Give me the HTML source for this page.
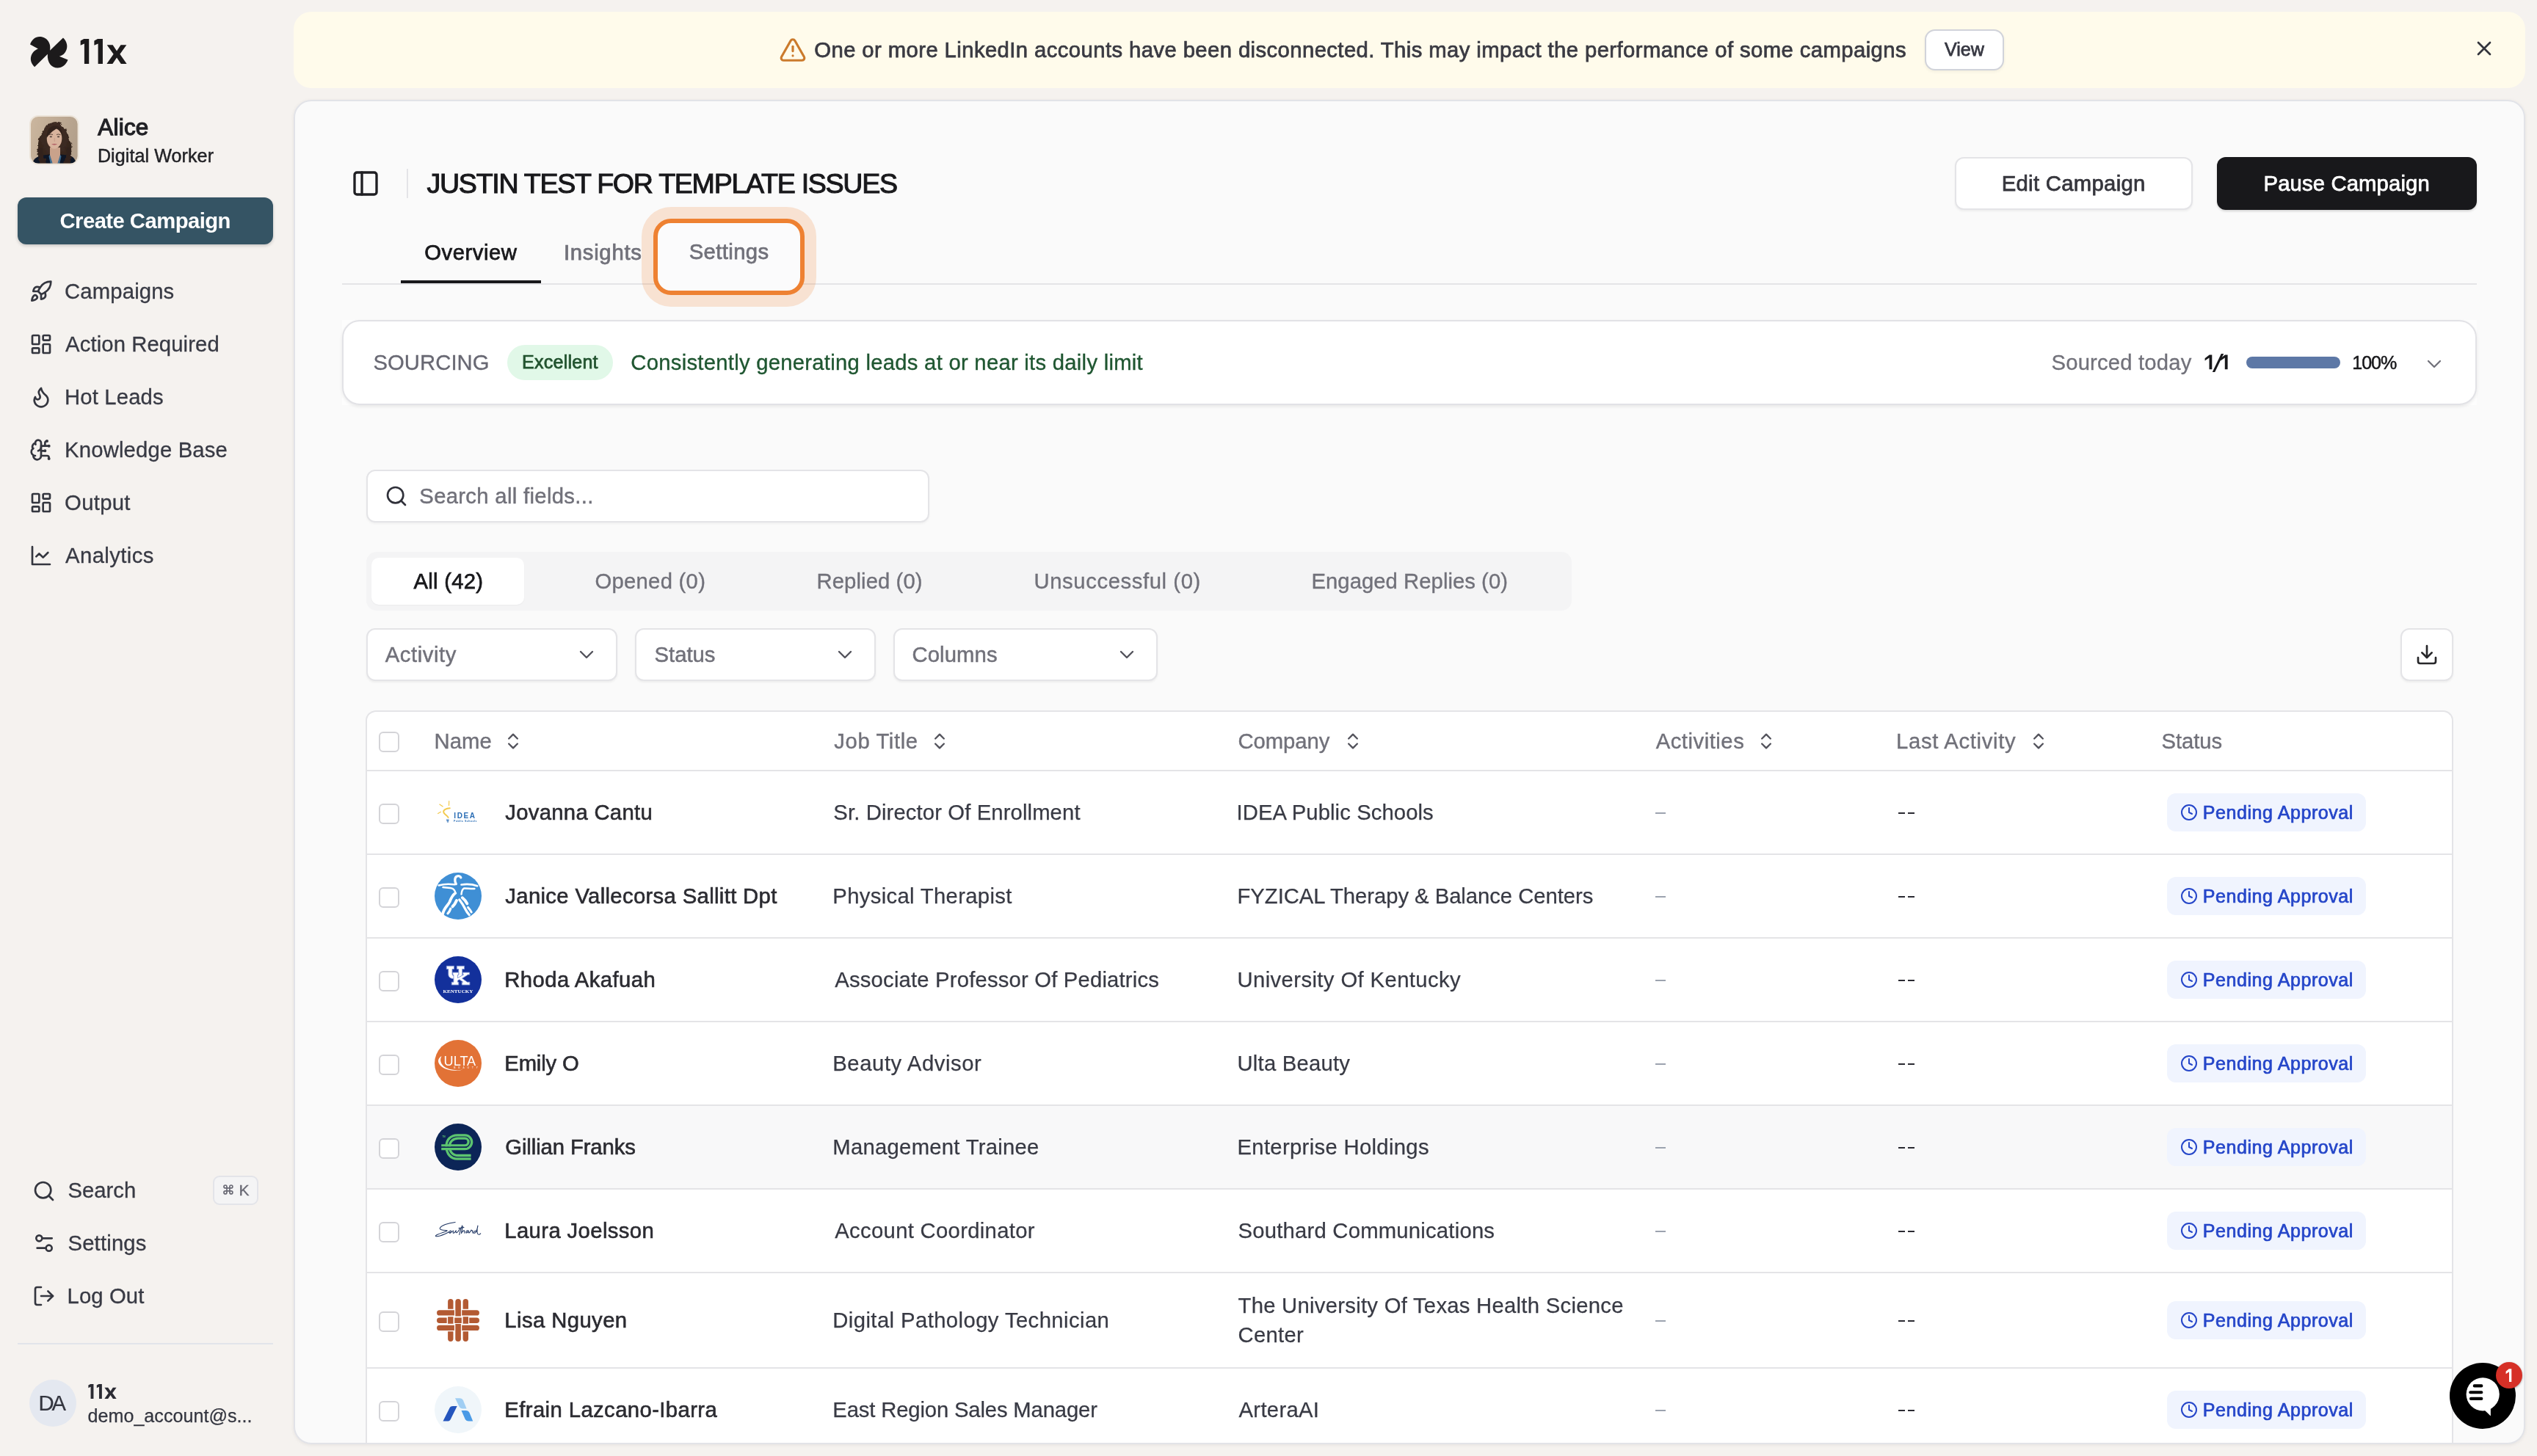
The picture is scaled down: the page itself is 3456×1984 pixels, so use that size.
<!DOCTYPE html>
<html lang="en">
<head>
<meta charset="utf-8">
<title>11x - Campaign</title>
<style>
*{box-sizing:border-box;margin:0;padding:0}
html,body{width:3456px;height:1984px;overflow:hidden}
body{background:#f5f2ef;font-family:"Liberation Sans",sans-serif;color:#27272a;position:relative;font-size:28px;line-height:1}
#app{position:absolute;left:0;top:0;width:3456px;height:1984px;will-change:transform}
.abs{position:absolute}
.t{position:absolute;white-space:nowrap;line-height:40px;height:40px}
.x{position:absolute;white-space:nowrap;line-height:40px;height:40px}
.med{-webkit-text-stroke:.75px currentColor}
.semi{-webkit-text-stroke:.9px currentColor}
svg{display:block}
.ico{position:absolute;fill:none;stroke:#34363f;stroke-width:2;stroke-linecap:round;stroke-linejoin:round}
/* sidebar */
.nav{position:absolute;left:88px;font-size:28px;line-height:40px;height:40px;color:#383a44;white-space:nowrap;letter-spacing:.9px;-webkit-text-stroke:.3px currentColor}
/* main */
#banner{position:absolute;left:400px;top:16px;width:3040px;height:104px;border-radius:24px;background:#fffbeb}
#panel{position:absolute;left:400px;top:136px;width:3040px;height:1832px;border-radius:24px;background:#fafafa;border:2px solid #e2e3e8;box-shadow:0 1px 5px rgba(0,0,0,.07);overflow:hidden}
.btn{position:absolute;border-radius:12px;font-size:30px;text-align:center}
.dd{position:absolute;top:856px;height:72px;border:2px solid #e4e4e7;border-radius:12px;background:#fff;box-shadow:0 2px 3px rgba(0,0,0,.05)}
.dd span{position:absolute;left:23px;top:14px;line-height:40px;font-size:28px;color:#71717a;letter-spacing:.9px;-webkit-text-stroke:.5px currentColor}
.tab{position:absolute;top:561px;line-height:40px;font-size:28px;color:#71717a;white-space:nowrap}
/* table */
#tbl{position:absolute;left:498px;top:968px;width:2844px;height:998px;border:2px solid #e4e4e7;border-bottom:none;border-radius:14px 14px 0 0;background:#fff;overflow:hidden}
.row{position:absolute;left:0;width:2840px;border-top:2px solid #e4e4e7}
.cb{position:absolute;left:16px;width:28px;height:28px;border:2px solid #d4d4d8;border-radius:6px;background:#fff}
.th{position:absolute;top:20px;line-height:40px;font-size:28px;color:#71717a;white-space:nowrap;letter-spacing:1.05px;-webkit-text-stroke:.4px currentColor}
.c{position:absolute;line-height:40px;font-size:28px;white-space:nowrap}
.nm{left:187px;color:#2b2b31;letter-spacing:.93px;-webkit-text-stroke:.55px currentColor}
.jt{left:635px;color:#383a44;letter-spacing:.72px}
.co{left:1185px;color:#383a44;letter-spacing:.62px}
.ac{left:1753px;color:#a1a1aa}
.la{left:2083px;color:#27272a}
.badge{position:absolute;left:2452px;width:271px;height:52px;border-radius:12px;background:#f0f4fe;color:#2546c9}
.badge b{position:absolute;left:48.500px;top:6px;line-height:40px;font-size:24px;font-weight:400;white-space:nowrap;letter-spacing:1.100px;-webkit-text-stroke:.7px currentColor}
.badge svg{position:absolute;left:18px;top:14px;width:24px;height:24px;fill:none;stroke:#2546c9;stroke-width:2;stroke-linecap:round;stroke-linejoin:round}
.ds{position:absolute;width:9px;height:2.500px;background:#2a2a32}
.jt,.co{-webkit-text-stroke:.25px currentColor}
.logo{position:absolute;left:92px;width:64px;height:64px}
.srt{position:absolute;width:28px;height:28px;fill:none;stroke:#52525b;stroke-width:2;stroke-linecap:round;stroke-linejoin:round}
</style>
</head>
<body>
<div id="app">
<!-- ============ SIDEBAR ============ -->
<svg class="abs" style="left:41px;top:50px" width="52" height="43" viewBox="0 0 51 42"><path fill="#1c1a1b" d="M0 10.1C2.5 4 7 0 12.6 0 21 0 28.5 7 26.6 18.2L44.1 1.3C49 6 50.5 12 48.6 17.3 47 22 43.5 25 39.1 26.2L50.5 30.9C48 37.5 43 41.6 36.6 41.6 29 41.6 22.6 35 23.4 23.2L6 40.4C1.5 36 0 31 1.3 26.2 2.5 21.5 6 18 10.7 16.1Z"/></svg>
<svg class="abs" style="left:109px;top:53px" width="64" height="34" viewBox="0 0 63.500 33.800"><g fill="#1c1a1b"><path d="M5.200 0H12.100V33.800H5.800V6.400L.600 8.600V2.500Z"/><path d="M23.800 0H30.700V33.800H24.400V6.400L19.200 8.600V2.500Z"/><path d="M36.400 8.100H44.300L49.700 16.300 55.100 8.100H62.900L54 20.700 63.200 33.800H55.400L49.700 25.300 44 33.800H36.100L45.300 20.700Z"/></g></svg>

<!-- Alice avatar -->
<svg class="abs" style="left:40px;top:157px" width="67.600" height="67.600" viewBox="0 0 67.600 67.600">
 <defs><clipPath id="av"><rect x="2" y="2" width="63.600" height="63.600" rx="10"/></clipPath>
 <linearGradient id="avbg" x1="0" y1="0" x2="1" y2=".3"><stop offset="0" stop-color="#ccb79f"/><stop offset="1" stop-color="#b3a08b"/></linearGradient>
 <filter id="avbl" x="-5%" y="-5%" width="110%" height="110%"><feGaussianBlur stdDeviation=".5"/></filter>
 <filter id="avcu" x="-10%" y="-10%" width="120%" height="120%"><feTurbulence type="fractalNoise" baseFrequency=".16" numOctaves="2" seed="7" result="n"/><feDisplacementMap in="SourceGraphic" in2="n" scale="6" xChannelSelector="R" yChannelSelector="G"/></filter>
 <radialGradient id="avhr" cx=".5" cy=".35" r=".7"><stop offset="0" stop-color="#4a3428"/><stop offset="1" stop-color="#2c1f19"/></radialGradient></defs>
 <rect width="67.600" height="67.600" rx="12" fill="#ece4d9"/>
 <g clip-path="url(#av)"><rect width="67.600" height="67.600" fill="url(#avbg)"/>
 <g filter="url(#avbl)">
  <path filter="url(#avcu)" d="M36 9C29 9 23 13 20 20 17 26 13 29 13 34 11 39 13 43 11 47 9 51 13 54 12 57 13 61 17 64 19 69H51C55 63 56 59 57 55 59 51 56 47 57.500 43 58 38 54 34 53.500 29 52 21 47 11 36 9Z" fill="url(#avhr)"/>
  <path d="M4 68C5 60 8 57 17 55L30 53 34 60 38 53 52 54.500C60 56 63 59 64 68Z" fill="#0e1526"/>
  <path d="M28 44H42V56L38.500 67H31.500L28 56Z" fill="#c9a28b"/>
  <path d="M28 54 32 67H29L26.500 56ZM42 54 43.500 56 41 67H38Z" fill="#3f6d90"/>
  <ellipse cx="34" cy="31.500" rx="10.300" ry="14.200" fill="#d8b39d"/>
  <path d="M23.500 31C23 20 28 14.500 35 14.300 41.500 14 45 19 45.300 28 43 23 40 19.500 37 18.500 33 20.500 28 24.500 23.500 31Z" fill="#33241d"/>
  <path d="M23.800 28C22.500 34 23.200 40 25.500 46 20.500 44 18.500 36 20 27ZM44.800 27C46 33 45.500 40 43 46 47.500 43 49.500 35 48 26Z" fill="#3a2a22"/>
  <path filter="url(#avcu)" d="M19 44C16.500 52 20 60 25 69H16C11.500 60 11.500 52 14 45ZM49.500 44C52.500 52 49.500 60 45 69H54C57.500 60 57.500 52 55 45Z" fill="#33241d"/>
  <ellipse cx="29.300" cy="29.300" rx="1.700" ry=".9" fill="#4a3a35"/><ellipse cx="39.600" cy="29.300" rx="1.700" ry=".9" fill="#4a3a35"/>
  <path d="M26.500 26.700Q29.500 25.300 32 26.500M37 26.500Q39.500 25.300 42.500 26.700" stroke="#3a2a22" stroke-width=".8" fill="none"/>
  <path d="M34.300 31V36" stroke="#c59c87" stroke-width=".9"/>
  <path d="M30 39.300Q34 38 38.200 39.300 34 42 30 39.300Z" fill="#b5666a"/>
 </g></g>
</svg>

<div class="abs" style="left:24px;top:269px;width:348px;height:64px;border-radius:12px;background:#355464;box-shadow:0 2px 4px rgba(0,0,0,.18)"></div>

<!-- nav icons -->
<svg class="ico" style="left:40px;top:381px" width="32" height="32" viewBox="0 0 24 24"><path d="M4.5 16.5c-1.5 1.26-2 5-2 5s3.74-.5 5-2c.71-.84.7-2.13-.09-2.91a2.18 2.18 0 0 0-2.91-.09z"/><path d="m12 15-3-3a22 22 0 0 1 2-3.95A12.88 12.88 0 0 1 22 2c0 2.72-.78 7.5-6 11a22.35 22.35 0 0 1-4 2z"/><path d="M9 12H4s.55-3.03 2-4c1.62-1.08 5 0 5 0"/><path d="M12 15v5s3.03-.55 4-2c1.08-1.62 0-5 0-5"/></svg>

<svg class="ico" style="left:40px;top:453px" width="32" height="32" viewBox="0 0 24 24"><rect width="7" height="9" x="3" y="3" rx="1"/><rect width="7" height="5" x="14" y="3" rx="1"/><rect width="7" height="9" x="14" y="12" rx="1"/><rect width="7" height="5" x="3" y="16" rx="1"/></svg>

<svg class="ico" style="left:40px;top:525px" width="32" height="32" viewBox="0 0 24 24"><path d="M8.5 14.5A2.5 2.5 0 0 0 11 12c0-1.38-.5-2-1-3-1.072-2.143-.224-4.054 2-6 .5 2.500 2 4.900 4 6.500 2 1.600 3 3.500 3 5.500a7 7 0 1 1-14 0c0-1.153.433-2.294 1-3a2.500 2.500 0 0 0 2.500 2.500z"/></svg>

<svg class="ico" style="left:40px;top:597px" width="32" height="32" viewBox="0 0 24 24"><path d="M12 5a3 3 0 1 0-5.997.125 4 4 0 0 0-2.526 5.770 4 4 0 0 0 .556 6.588A4 4 0 1 0 12 18Z"/><path d="M9 13a4.500 4.500 0 0 0 3-4"/><path d="M6.003 5.125A3 3 0 0 0 6.401 6.500"/><path d="M3.477 10.896a4 4 0 0 1 .585-.396"/><path d="M6 18a4 4 0 0 1-1.967-.516"/><path d="M12 13h4"/><path d="M12 18h6a2 2 0 0 1 2 2v1"/><path d="M12 8h8"/><path d="M16 8V5a2 2 0 0 1 2-2"/><circle cx="16" cy="13" r=".5"/><circle cx="18" cy="3" r=".5"/><circle cx="20" cy="21" r=".5"/><circle cx="20" cy="8" r=".5"/></svg>

<svg class="ico" style="left:40px;top:669px" width="32" height="32" viewBox="0 0 24 24"><rect width="7" height="9" x="3" y="3" rx="1"/><rect width="7" height="5" x="14" y="3" rx="1"/><rect width="7" height="9" x="14" y="12" rx="1"/><rect width="7" height="5" x="3" y="16" rx="1"/></svg>

<svg class="ico" style="left:40px;top:741px" width="32" height="32" viewBox="0 0 24 24"><path d="M3 3v18h18"/><path d="m19 9-5 5-4-4-3 3"/></svg>

<!-- bottom nav -->
<svg class="ico" style="left:44px;top:1607px" width="32" height="32" viewBox="0 0 24 24"><circle cx="11" cy="11" r="8"/><path d="m21 21-4.300-4.300"/></svg>
<div class="abs" style="left:290px;top:1602px;width:62px;height:40px;border-radius:9px;border:2px solid #e3e4e9;background:#f4f4f5"></div>
<svg class="abs" style="left:302.670px;top:1612.670px;fill:none;stroke:#6a6a75;stroke-width:2.570;stroke-linecap:round;stroke-linejoin:round" width="15.870" height="15.870" viewBox="0 0 24 24"><path d="M15 6v12a3 3 0 1 0 3-3H6a3 3 0 1 0 3 3V6a3 3 0 1 0-3 3h12a3 3 0 1 0-3-3"/></svg>
<div class="t" style="left:325.600px;top:1602.400px;font-size:21px;color:#6a6a75;-webkit-text-stroke:.35px currentColor">K</div>

<svg class="ico" style="left:44px;top:1678px" width="32" height="32" viewBox="0 0 24 24"><path d="M20 7h-9"/><path d="M14 17H5"/><circle cx="17" cy="17" r="3"/><circle cx="7" cy="7" r="3"/></svg>

<svg class="ico" style="left:44px;top:1750px" width="32" height="32" viewBox="0 0 24 24"><path d="M9 21H5a2 2 0 0 1-2-2V5a2 2 0 0 1 2-2h4"/><polyline points="16 17 21 12 16 7"/><line x1="21" x2="9" y1="12" y2="12"/></svg>

<div class="abs" style="left:24px;top:1830px;width:348px;height:2px;background:#e2e4ea"></div>
<div class="abs" style="left:40px;top:1880px;width:64px;height:64px;border-radius:50%;background:#e4e8f0"></div>
<svg class="abs" style="left:120px;top:1885.500px" width="39" height="20.200" viewBox="0 0 63.500 33.800" preserveAspectRatio="none"><g fill="#2b2b33"><path d="M5.200 0H12.100V33.800H5.800V6.400L.600 8.600V2.500Z"/><path d="M23.800 0H30.700V33.800H24.400V6.400L19.200 8.600V2.500Z"/><path d="M36.400 8.100H44.300L49.700 16.300 55.100 8.100H62.900L54 20.700 63.200 33.800H55.400L49.700 25.300 44 33.800H36.100L45.300 20.700Z"/></g></svg>
<!-- ============ BANNER ============ -->
<div id="banner"></div>
<svg class="abs" style="left:1061.400px;top:48.850px;fill:none;stroke:#cb7a2c;stroke-width:2;stroke-linecap:round;stroke-linejoin:round" width="38" height="38" viewBox="0 0 24 24"><path d="m21.73 18-8-14a2 2 0 0 0-3.480 0l-8 14A2 2 0 0 0 4 21h16a2 2 0 0 0 1.730-3"/><path d="M12 9v4"/><path d="M12 17h.01"/></svg>
<div class="abs" style="left:2622px;top:40px;width:108px;height:56px;border-radius:14px;border:2px solid #d1d3da;background:#fff;box-shadow:0 2px 4px rgba(0,0,0,.05)"></div>
<svg class="abs" style="left:3367px;top:49px;fill:none;stroke:#33343c;stroke-width:2.700;stroke-linecap:round" width="34" height="34" viewBox="0 0 34 34"><path d="M9 9 25 25M25 9 9 25"/></svg>

<!-- ============ PANEL ============ -->
<div id="panel"></div>

<svg class="ico" style="left:478px;top:230px;stroke:#1f1f23" width="40" height="40" viewBox="0 0 24 24"><rect width="18" height="18" x="3" y="3" rx="2"/><path d="M9 3v18"/></svg>
<div class="abs" style="left:554px;top:230px;width:2px;height:40px;background:#e4e4e7"></div>

<div class="abs" style="left:2663px;top:214px;width:324px;height:72px;border-radius:12px;border:2px solid #e4e4e7;background:#fff;box-shadow:0 2px 3px rgba(0,0,0,.05)"></div>
<div class="abs" style="left:3020px;top:214px;width:354px;height:72px;border-radius:12px;background:#18181b;box-shadow:0 2px 3px rgba(0,0,0,.15)"></div>

<!-- tabs -->
<div class="abs" style="left:466px;top:386px;width:2908px;height:2px;background:#e4e4e7"></div>
<div class="abs" style="left:546px;top:382px;width:191px;height:4px;background:#18181b"></div>
<div class="abs" style="left:890px;top:298px;width:206px;height:104px;border-radius:24px;border:6px solid #ee8132;background:#fbfbfc;box-shadow:0 0 0 16px rgba(238,129,50,.2)"></div>

<!-- sourcing card -->
<div class="abs" style="left:466px;top:436px;width:2908px;height:116px;background:#fdfdfd"></div>
<div class="abs" style="left:466px;top:436px;width:2908px;height:116px;border-radius:24px;border:2px solid #e2e2e6;background:#fff;box-shadow:0 2px 4px rgba(0,0,0,.08)"></div>
<div class="abs" style="left:691px;top:470px;width:144px;height:48px;border-radius:24px;background:#e1f8e8"></div>

<svg class="abs" style="left:3003px;top:482px" width="32" height="25" viewBox="0 0 32 25"><g fill="#18181b"><path d="M6.700 1.400H10.300V21.300H6.500V5.600L.600 9.400V6.300Z"/><path d="M28 1.400H31.600V21.300H27.800V5.600L21.900 9.400V6.300Z"/><path d="M22.800 0H26.200L14.200 24.900H10.800Z"/></g></svg>
<div class="abs" style="left:3060px;top:486px;width:128px;height:16px;border-radius:8px;background:#5d78a6"></div>
<svg class="ico" style="left:3300px;top:480px;stroke:#71717a;stroke-width:1.700" width="32" height="32" viewBox="0 0 24 24"><path d="m6 9 6 6 6-6"/></svg>

<!-- search -->
<div class="abs" style="left:499px;top:640px;width:767px;height:72px;border-radius:12px;border:2px solid #e4e4e7;background:#fff;box-shadow:0 2px 3px rgba(0,0,0,.04)"></div>
<svg class="ico" style="left:524px;top:660px;stroke:#30313a" width="32" height="32" viewBox="0 0 24 24"><circle cx="11" cy="11" r="8"/><path d="m21 21-4.300-4.300"/></svg>

<!-- segmented tabs -->
<div class="abs" style="left:499px;top:752px;width:1642px;height:80px;border-radius:14px;background:#f4f4f5"></div>
<div class="abs" style="left:506px;top:760px;width:208px;height:64px;border-radius:10px;background:#fff;box-shadow:0 1px 2px rgba(0,0,0,.04)"></div>

<!-- dropdowns -->
<div class="dd" style="left:499px;width:342px"></div>
<div class="dd" style="left:865px;width:328px"></div>
<div class="dd" style="left:1217px;width:360px"></div>
<svg class="ico" style="left:783px;top:876px;stroke:#52525b;stroke-width:1.800" width="32" height="32" viewBox="0 0 24 24"><path d="m6 9 6 6 6-6"/></svg>
<svg class="ico" style="left:1135px;top:876px;stroke:#52525b;stroke-width:1.800" width="32" height="32" viewBox="0 0 24 24"><path d="m6 9 6 6 6-6"/></svg>
<svg class="ico" style="left:1519px;top:876px;stroke:#52525b;stroke-width:1.800" width="32" height="32" viewBox="0 0 24 24"><path d="m6 9 6 6 6-6"/></svg>
<div class="abs" style="left:3270px;top:856px;width:72px;height:72px;border-radius:12px;border:2px solid #e4e4e7;background:#fff;box-shadow:0 2px 3px rgba(0,0,0,.05)"></div>
<svg class="ico" style="left:3290px;top:876px;stroke:#27272a" width="32" height="32" viewBox="0 0 24 24"><path d="M21 15v4a2 2 0 0 1-2 2H5a2 2 0 0 1-2-2v-4"/><polyline points="7 10 12 15 17 10"/><line x1="12" x2="12" y1="15" y2="3"/></svg>
<!-- ============ TABLE ============ -->
<div id="tbl">
<div class="cb" style="top:27px"></div>
<svg class="srt" style="left:184.85px;top:26.200px" viewBox="0 0 24 24"><path d="m7 15 5 5 5-5"/><path d="m7 9 5-5 5 5"/></svg>
<svg class="srt" style="left:765.9px;top:26.200px" viewBox="0 0 24 24"><path d="m7 15 5 5 5-5"/><path d="m7 9 5-5 5 5"/></svg>
<svg class="srt" style="left:1329.3px;top:26.200px" viewBox="0 0 24 24"><path d="m7 15 5 5 5-5"/><path d="m7 9 5-5 5 5"/></svg>
<svg class="srt" style="left:1892.2px;top:26.200px" viewBox="0 0 24 24"><path d="m7 15 5 5 5-5"/><path d="m7 9 5-5 5 5"/></svg>
<svg class="srt" style="left:2263.2px;top:26.200px" viewBox="0 0 24 24"><path d="m7 15 5 5 5-5"/><path d="m7 9 5-5 5 5"/></svg>
<div class="row" style="top:79px;height:114px">
<div class="cb" style="top:44px"></div>
<svg class="logo" style="top:24px" viewBox="0 0 64 64"><g fill="none" stroke="#f2c94c" stroke-linecap="round"><path d="M20.800 26.300c-5 .2-9 2.200-8.600 5.200.5 3.300 5.400 4.800 6.400 7.500" stroke-width="1.900"/><path d="M19.700 16.700l-.2 5.800M6.800 21.100l4.400 2.800M4.600 33.500l3.900-2.200" stroke-width="1.200"/></g><path d="M16.400 42h2.800M16.800 43.500h2.200M17.300 45h1.400" stroke="#2a6db5" stroke-width="1" stroke-linecap="round"/><text x="26.300" y="39.800" textLength="28.600" lengthAdjust="spacing" font-family="Liberation Sans" font-weight="700" font-size="10" fill="#2a6db5">IDEA</text><text x="26.100" y="45.100" textLength="31.300" lengthAdjust="spacing" font-family="Liberation Sans" font-weight="700" font-size="3.500" fill="#2a6db5">Public Schools</text></svg>
<i class="ds" style="left:1754.500px;top:55.8px;width:14.500px;background:#9ca3af"></i><i class="ds" style="left:2086px;top:55.8px"></i><i class="ds" style="left:2099px;top:55.8px"></i>
<div class="badge" style="top:30px"><svg viewBox="0 0 24 24"><circle cx="12" cy="12" r="10"/><polyline points="12 6 12 12 16 14"/></svg></div>
</div>
<div class="row" style="top:193px;height:114px">
<div class="cb" style="top:44px"></div>
<svg class="logo" style="top:24px" viewBox="0 0 64 64"><circle cx="32" cy="32" r="32" fill="#3f8fd5"/><g fill="none" stroke="#fff" stroke-linecap="round" stroke-linejoin="round"><path d="M29.300 15.600C27 12 27.200 6.300 30.600 5c2.400-.8 4.800.2 5.200 1.800" stroke-width="3.300"/><path d="M5.700 17.400c6.500-1.800 15-1.900 21.800-1.100M36.400 16.500c6.700-1 15.500-.5 21.800 1.700" stroke-width="2.600"/><path d="M11.500 20.100c4.700.6 9.500.4 13 1.700 2 1.200 2.700 2.200 3.300 3.800M54.400 21.900c-4.500.7-10.400-.9-14.400-.4-2.500 1.500-3.200 4.500-3.500 8.100" stroke-width="2.500"/><path d="M28.300 28c-4.300 3-6.300 8-7.800 12-2.500 5-7.500 8-9.300 16" stroke-width="3.800"/><path d="M30 38c-1.500 3.500-3.500 6.500-5.500 8.300" stroke-width="4"/><path d="M21.800 49.200c-1 2.800-2.300 5.300-3.800 6.500" stroke-width="3.300"/><path d="M33.800 37c3.200 4 6.200 9 8.200 13 1.500 3 3.500 6 5.200 7.600" stroke-width="3.300"/><path d="M37.800 34.300c2.700 2.200 5.200 5.200 6.600 8.100" stroke-width="3.800"/><path d="M45.600 47.400c1.900 2.100 3.600 4.600 4.600 6.600" stroke-width="3"/></g></svg>
<i class="ds" style="left:1754.500px;top:55.8px;width:14.500px;background:#9ca3af"></i><i class="ds" style="left:2086px;top:55.8px"></i><i class="ds" style="left:2099px;top:55.8px"></i>
<div class="badge" style="top:30px"><svg viewBox="0 0 24 24"><circle cx="12" cy="12" r="10"/><polyline points="12 6 12 12 16 14"/></svg></div>
</div>
<div class="row" style="top:307px;height:114px">
<div class="cb" style="top:44px"></div>
<svg class="logo" style="top:24px" viewBox="0 0 64 64"><circle cx="32" cy="32" r="32" fill="#13309b"/><g fill="#fff" stroke="#7d92d2" stroke-width=".9" stroke-linejoin="round"><path d="M16.300 13.300H26.500V17.600H24V24.500C24 26 25 26.600 28.200 26.600 31.500 26.600 32.800 26 32.800 24.500V17.600H30.300V13.300H40.500V17.600H37.700V24.500C37.700 29 34.500 30.800 28.200 30.800 22 30.800 18.800 29 18.800 24.500V17.600H16.300Z"/><path d="M24.800 22.100H32.800V25.600H31.400V29.600L39.600 25.100H38.600V22.100H47.600V25.100H45.600L37.600 30.200 44.600 35.200H47.900V39.100H37.200V35.200H38.800L33.800 31.800 31.400 33.200V35.200H32.800V39.100H23.200V35.200H25.900V25.600H24.800Z"/></g><text x="11.600" y="50.100" textLength="40.700" lengthAdjust="spacingAndGlyphs" font-family="Liberation Serif" font-weight="700" font-size="7" fill="#fff">KENTUCKY</text></svg>
<i class="ds" style="left:1754.500px;top:55.8px;width:14.500px;background:#9ca3af"></i><i class="ds" style="left:2086px;top:55.8px"></i><i class="ds" style="left:2099px;top:55.8px"></i>
<div class="badge" style="top:30px"><svg viewBox="0 0 24 24"><circle cx="12" cy="12" r="10"/><polyline points="12 6 12 12 16 14"/></svg></div>
</div>
<div class="row" style="top:421px;height:114px">
<div class="cb" style="top:44px"></div>
<svg class="logo" style="top:24px" viewBox="0 0 64 64"><circle cx="32" cy="32" r="32" fill="#e27236"/><text x="12.600" y="34.700" textLength="43.600" lengthAdjust="spacingAndGlyphs" font-family="Liberation Sans" font-size="19" fill="#fff">ULTA</text><path d="M9.500 22.100C4 25.500 3.300 31 9 36c6 5 19 7.500 30.100 4.500-11 1.800-22.100-.3-27.100-5-4.200-4-4.900-9-2.500-13.400z" fill="#fff"/><text x="25.900" y="38.900" textLength="33" lengthAdjust="spacing" font-family="Liberation Sans" font-weight="700" font-size="3.600" fill="#f7d3bf">BEAUTY</text></svg>
<i class="ds" style="left:1754.500px;top:55.8px;width:14.500px;background:#9ca3af"></i><i class="ds" style="left:2086px;top:55.8px"></i><i class="ds" style="left:2099px;top:55.8px"></i>
<div class="badge" style="top:30px"><svg viewBox="0 0 24 24"><circle cx="12" cy="12" r="10"/><polyline points="12 6 12 12 16 14"/></svg></div>
</div>
<div class="row" style="top:535px;height:114px;background:#f8f8f9">
<div class="cb" style="top:44px"></div>
<svg class="logo" style="top:24px" viewBox="0 0 64 64"><circle cx="32" cy="32" r="32" fill="#0c2557"/><g fill="none" stroke="#5cc46f" stroke-width="3.300"><path d="M9.200 34.600H41.300A9.400 9.400 0 0 0 41.300 15.800H31C22 15.800 16 22 16 31 16 41 22 48.200 31 48.200H49.600"/><path d="M9.200 29.800H41.300A4.800 4.800 0 0 0 41.300 20.200H32C25 20.200 20.300 25 20.300 31 20.300 38.500 25 43.500 32 43.500H49.600"/></g><path d="M9.200 32.200H44" stroke="#0c2557" stroke-width="1.500"/><text x="10.600" y="19.200" font-family="Liberation Sans" font-weight="700" font-size="2.800" fill="#5cc46f">TM</text></svg>
<i class="ds" style="left:1754.500px;top:55.8px;width:14.500px;background:#9ca3af"></i><i class="ds" style="left:2086px;top:55.8px"></i><i class="ds" style="left:2099px;top:55.8px"></i>
<div class="badge" style="top:30px"><svg viewBox="0 0 24 24"><circle cx="12" cy="12" r="10"/><polyline points="12 6 12 12 16 14"/></svg></div>
</div>
<div class="row" style="top:649px;height:114px">
<div class="cb" style="top:44px"></div>
<svg class="logo" style="top:24px" viewBox="0 0 64 64"><g fill="none" stroke="#1d3461" stroke-width="1.050" stroke-linecap="round" stroke-linejoin="round"><path d="M28.100 20.400C18 21.500 9 25 7.300 28.400 6.500 31 12 31.200 16.600 31.700 20 32.200 8 35 2.500 38 0 39.600 2 40.200 5 39.600 10 38.600 15 36 19.300 33.900"/><path d="M19.300 33.900C20.500 32 22.500 31.500 22.800 33 23 34.800 20.500 36 20 34.800 21 34.500 24 33.500 25.500 32 25 34 24.800 35.500 26 35.200 27 35 28.500 33 29.200 31.800 29 33.500 28.800 35 30 34.800 31.500 34.500 33.500 31 35 28.500"/><path d="M37.500 25.100C36 29 34.500 33 33.800 37.500M33 28.600 40 27.600"/><path d="M38.500 26C37.500 30 36.800 33 36.500 35.500 37.500 33 39.500 31.500 40.500 32 41.500 32.800 40 34.800 41 35.200"/><path d="M46 32C44.500 31 42.500 33 42.800 34.600 43.200 35.800 45.500 34 46.200 32 46 33.500 46 35 47 35 48.500 34 49.500 32 50 31 50.500 32 51.500 32.200 52 32 51.500 33.500 51.500 35 52.500 35.200"/><path d="M56.500 32.500C55 31.500 53 33.500 53.500 35 54 36 56.500 34.500 57.200 32 58 29.500 58.800 27 58.900 25.100 58 29 57.500 33 58.500 36 59.500 37.800 61.800 37.500 62.700 35.800"/></g></svg>
<i class="ds" style="left:1754.500px;top:55.8px;width:14.500px;background:#9ca3af"></i><i class="ds" style="left:2086px;top:55.8px"></i><i class="ds" style="left:2099px;top:55.8px"></i>
<div class="badge" style="top:30px"><svg viewBox="0 0 24 24"><circle cx="12" cy="12" r="10"/><polyline points="12 6 12 12 16 14"/></svg></div>
</div>
<div class="row" style="top:763px;height:130px">
<div class="cb" style="top:52px"></div>
<svg class="logo" style="top:32px" viewBox="0 0 64 64"><g fill="#b35a33"><path d="M18.100 16.800V6.700A3.700 3.700 0 0 1 25.500 6.700V16.800ZM38.600 16.800V6.700A3.700 3.700 0 0 1 46 6.700V16.800ZM18.100 47.200V57.300A3.700 3.700 0 0 0 25.500 57.300V47.200ZM38.600 47.200V57.300A3.700 3.700 0 0 0 46 57.300V47.200Z"/><path d="M18.100 27.200H25.500V36.800H18.100ZM38.600 27.200H46V36.800H38.600ZM27.200 28.500H36.800V36H27.200Z"/><path d="M28.300 26.600V6.800A3.800 3.800 0 0 1 35.900 6.800V26.600ZM28.300 37V57.200A3.800 3.800 0 0 0 35.900 57.200V37Z"/><path d="M26.900 18.300H6.700A3.650 3.650 0 0 0 6.700 25.600H26.900ZM37.200 18.300H57.300A3.650 3.650 0 0 1 57.300 25.600H37.200ZM26.900 38.800H6.700A3.650 3.650 0 0 0 6.700 46.100H26.900ZM37.200 38.800H57.300A3.650 3.650 0 0 1 57.300 46.100H37.200Z"/><path d="M16.700 28.500H6.750A3.750 3.750 0 0 0 6.750 36H16.700ZM47.200 28.500H57.250A3.750 3.750 0 0 1 57.250 36H47.200Z"/></g></svg>
<i class="ds" style="left:1754.500px;top:63.8px;width:14.500px;background:#9ca3af"></i><i class="ds" style="left:2086px;top:63.8px"></i><i class="ds" style="left:2099px;top:63.8px"></i>
<div class="badge" style="top:38px"><svg viewBox="0 0 24 24"><circle cx="12" cy="12" r="10"/><polyline points="12 6 12 12 16 14"/></svg></div>
</div>
<div class="row" style="top:893px;height:114px">
<div class="cb" style="top:44px"></div>
<svg class="logo" style="top:24px" viewBox="0 0 64 64"><circle cx="32" cy="32" r="32" fill="#f0f6fa"/><path d="M11.500 47.500 20.500 29.500C21.500 27.500 23 26.900 25 26.900H30.700L21.800 45C20.800 47 19.500 47.500 17.500 47.500Z" fill="#2455bd"/><path d="M28 16.200H34C36.500 16.200 38 17.200 39 19.300L43.600 30.500H38.500C36 30.500 34.500 29.500 33.500 27.500Z" fill="#a0cef3"/><path d="M36.500 32.900H42.500C45 32.900 46.500 34 47.500 36L52.200 47.500H46.500C44 47.500 42.500 46.500 41.500 44.500Z" fill="#4a9ae6"/></svg>
<i class="ds" style="left:1754.500px;top:55.8px;width:14.500px;background:#9ca3af"></i><i class="ds" style="left:2086px;top:55.8px"></i><i class="ds" style="left:2099px;top:55.8px"></i>
<div class="badge" style="top:30px"><svg viewBox="0 0 24 24"><circle cx="12" cy="12" r="10"/><polyline points="12 6 12 12 16 14"/></svg></div>
</div>
</div>
<!-- chat widget -->
<svg class="abs" style="left:3337px;top:1856.700px" width="90" height="90" viewBox="0 0 90 90"><circle cx="45" cy="45" r="45" fill="#000"/><circle cx="45.200" cy="42.800" r="22.600" fill="#fff"/><path d="M47.500 64.500 55.900 72.600V60Z" fill="#fff"/><g stroke="#000" stroke-width="4.100" stroke-linecap="round"><path d="M33.750 31.400H43.350M28.250 40.200H43.350M28.950 48.900H43.350"/></g></svg>
<div class="abs" style="left:3400px;top:1856px;width:36px;height:36px;border-radius:50%;background:#d63027;box-shadow:0 1px 3px rgba(0,0,0,.35)"></div>
<svg class="abs" style="left:3412px;top:1864px" width="12" height="20" viewBox="0 0 12 20"><path d="M5.800 1.300H9.300V19.100H6V5.300L1.600 8.200V4.700Z" fill="#fff"/></svg>
<!-- ============ TEXT LAYER ============ -->
<div class="x" style="left:133.30px;top:153.7px;font-size:31.35px;color:#222226;letter-spacing:0.250px;-webkit-text-stroke:1.25px currentColor">Alice</div>
<div class="x" style="left:132.90px;top:192.2px;font-size:25.08px;color:#222226;letter-spacing:0.084px;-webkit-text-stroke:0.45px currentColor">Digital Worker</div>
<div class="x" style="left:81.50px;top:280.5px;font-size:29.26px;color:#fff;letter-spacing:-0.543px;font-weight:700">Create Campaign</div>
<div class="x" style="left:88.10px;top:376.8px;font-size:29.26px;color:#383a44;letter-spacing:0.150px;-webkit-text-stroke:0.3px currentColor">Campaigns</div>
<div class="x" style="left:89.10px;top:448.7px;font-size:29.26px;color:#383a44;letter-spacing:0.103px;-webkit-text-stroke:0.3px currentColor">Action Required</div>
<div class="x" style="left:88.10px;top:521.0px;font-size:29.26px;color:#383a44;letter-spacing:0.144px;-webkit-text-stroke:0.3px currentColor">Hot Leads</div>
<div class="x" style="left:88.10px;top:593.0px;font-size:29.26px;color:#383a44;letter-spacing:0.170px;-webkit-text-stroke:0.3px currentColor">Knowledge Base</div>
<div class="x" style="left:88.10px;top:665.0px;font-size:29.26px;color:#383a44;letter-spacing:0.320px;-webkit-text-stroke:0.3px currentColor">Output</div>
<div class="x" style="left:89.10px;top:737.0px;font-size:29.26px;color:#383a44;letter-spacing:0.400px;-webkit-text-stroke:0.3px currentColor">Analytics</div>
<div class="x" style="left:92.50px;top:1601.6px;font-size:29.26px;color:#383a44;letter-spacing:0.000px;-webkit-text-stroke:0.3px currentColor">Search</div>
<div class="x" style="left:92.50px;top:1674.3px;font-size:29.26px;color:#383a44;letter-spacing:0.171px;-webkit-text-stroke:0.3px currentColor">Settings</div>
<div class="x" style="left:91.50px;top:1746.0px;font-size:29.26px;color:#383a44;letter-spacing:0.129px;-webkit-text-stroke:0.3px currentColor">Log Out</div>
<div class="x" style="left:52.50px;top:1892.1px;font-size:29.26px;color:#33353f;letter-spacing:-3.000px;-webkit-text-stroke:0.2px currentColor">DA</div>
<div class="x" style="left:119.50px;top:1909.2px;font-size:25.08px;color:#33353f;letter-spacing:0.037px;-webkit-text-stroke:0.25px currentColor">demo_account@s...</div>
<div class="x" style="left:1109.30px;top:47.5px;font-size:29.26px;color:#3a3a42;letter-spacing:0.416px;-webkit-text-stroke:0.75px currentColor">One or more LinkedIn accounts have been disconnected. This may impact the performance of some campaigns</div>
<div class="x" style="left:2649.10px;top:46.9px;font-size:25.08px;color:#373842;letter-spacing:-0.069px;-webkit-text-stroke:0.75px currentColor">View</div>
<div class="x" style="left:581.50px;top:229.8px;font-size:37.62px;color:#18181b;letter-spacing:-1.300px;-webkit-text-stroke:1.05px currentColor">JUSTIN TEST FOR TEMPLATE ISSUES</div>
<div class="x" style="left:2726.70px;top:230.3px;font-size:29.26px;color:#35353c;letter-spacing:0.319px;-webkit-text-stroke:0.75px currentColor">Edit Campaign</div>
<div class="x" style="left:3083.50px;top:230.3px;font-size:29.26px;color:#fff;letter-spacing:0.139px;-webkit-text-stroke:0.75px currentColor">Pause Campaign</div>
<div class="x" style="left:578.20px;top:323.5px;font-size:29.26px;color:#18181b;letter-spacing:0.545px;-webkit-text-stroke:0.75px currentColor">Overview</div>
<div class="x" style="left:767.90px;top:323.5px;font-size:29.26px;color:#71717a;letter-spacing:0.741px;-webkit-text-stroke:0.75px currentColor">Insights</div>
<div class="x" style="left:938.70px;top:323.4px;font-size:29.26px;color:#71717a;letter-spacing:0.394px;-webkit-text-stroke:0.75px currentColor">Settings</div>
<div class="x" style="left:508.50px;top:473.8px;font-size:29.26px;color:#686873;letter-spacing:0.051px;-webkit-text-stroke:0.3px currentColor">SOURCING</div>
<div class="x" style="left:711.00px;top:473.4px;font-size:25.08px;color:#22532f;letter-spacing:0.224px;-webkit-text-stroke:0.75px currentColor">Excellent</div>
<div class="x" style="left:859.30px;top:473.7px;font-size:29.26px;color:#1f5631;letter-spacing:0.265px;-webkit-text-stroke:0.35px currentColor">Consistently generating leads at or near its daily limit</div>
<div class="x" style="left:2794.50px;top:473.7px;font-size:29.26px;color:#71717a;letter-spacing:0.184px;-webkit-text-stroke:0.3px currentColor">Sourced today</div>
<div class="x" style="left:3204.20px;top:473.5px;font-size:25.08px;color:#18181b;letter-spacing:-0.997px;-webkit-text-stroke:0.5px currentColor">100%</div>
<div class="x" style="left:571.30px;top:655.5px;font-size:29.26px;color:#71717a;letter-spacing:0.322px;-webkit-text-stroke:0.45px currentColor">Search all fields...</div>
<div class="x" style="left:563.60px;top:772.0px;font-size:29.26px;color:#18181b;letter-spacing:0.259px;-webkit-text-stroke:0.75px currentColor">All (42)</div>
<div class="x" style="left:810.50px;top:772.0px;font-size:29.26px;color:#71717a;letter-spacing:0.267px;-webkit-text-stroke:0.35px currentColor">Opened (0)</div>
<div class="x" style="left:1112.50px;top:772.0px;font-size:29.26px;color:#71717a;letter-spacing:0.100px;-webkit-text-stroke:0.35px currentColor">Replied (0)</div>
<div class="x" style="left:1408.50px;top:772.0px;font-size:29.26px;color:#71717a;letter-spacing:0.600px;-webkit-text-stroke:0.35px currentColor">Unsuccessful (0)</div>
<div class="x" style="left:1786.50px;top:772.0px;font-size:29.26px;color:#71717a;letter-spacing:0.044px;-webkit-text-stroke:0.35px currentColor">Engaged Replies (0)</div>
<div class="x" style="left:524.70px;top:871.6px;font-size:29.26px;color:#71717a;letter-spacing:0.578px;-webkit-text-stroke:0.5px currentColor">Activity</div>
<div class="x" style="left:891.50px;top:871.6px;font-size:29.26px;color:#71717a;letter-spacing:0.000px;-webkit-text-stroke:0.5px currentColor">Status</div>
<div class="x" style="left:1242.50px;top:871.6px;font-size:29.26px;color:#71717a;letter-spacing:0.100px;-webkit-text-stroke:0.5px currentColor">Columns</div>
<div class="x" style="left:591.50px;top:990.0px;font-size:29.26px;color:#71717a;letter-spacing:0.065px;-webkit-text-stroke:0.4px currentColor">Name</div>
<div class="x" style="left:1136.30px;top:990.0px;font-size:29.26px;color:#71717a;letter-spacing:0.600px;-webkit-text-stroke:0.4px currentColor">Job Title</div>
<div class="x" style="left:1686.50px;top:990.0px;font-size:29.26px;color:#71717a;letter-spacing:-0.067px;-webkit-text-stroke:0.4px currentColor">Company</div>
<div class="x" style="left:2255.70px;top:990.0px;font-size:29.26px;color:#71717a;letter-spacing:0.520px;-webkit-text-stroke:0.4px currentColor">Activities</div>
<div class="x" style="left:2583.00px;top:990.0px;font-size:29.26px;color:#71717a;letter-spacing:0.683px;-webkit-text-stroke:0.4px currentColor">Last Activity</div>
<div class="x" style="left:2944.50px;top:990.0px;font-size:29.26px;color:#71717a;letter-spacing:-0.080px;-webkit-text-stroke:0.4px currentColor">Status</div>
<div class="x" style="left:688.30px;top:1087.0px;font-size:29.26px;color:#2b2b31;letter-spacing:0.300px;-webkit-text-stroke:0.6px currentColor">Jovanna Cantu</div>
<div class="x" style="left:1135.30px;top:1087.0px;font-size:29.26px;color:#383a44;letter-spacing:0.120px;-webkit-text-stroke:0.25px currentColor">Sr. Director Of Enrollment</div>
<div class="x" style="left:1684.50px;top:1087.0px;font-size:29.26px;color:#383a44;letter-spacing:0.089px;-webkit-text-stroke:0.25px currentColor">IDEA Public Schools</div>
<div class="x" style="left:3000.70px;top:1087.0px;font-size:25.08px;color:#2546c9;letter-spacing:0.543px;-webkit-text-stroke:0.7px currentColor">Pending Approval</div>
<div class="x" style="left:688.30px;top:1201.0px;font-size:29.26px;color:#2b2b31;letter-spacing:0.343px;-webkit-text-stroke:0.6px currentColor">Janice Vallecorsa Sallitt Dpt</div>
<div class="x" style="left:1134.30px;top:1201.0px;font-size:29.26px;color:#383a44;letter-spacing:0.327px;-webkit-text-stroke:0.25px currentColor">Physical Therapist</div>
<div class="x" style="left:1685.50px;top:1201.0px;font-size:29.26px;color:#383a44;letter-spacing:-0.038px;-webkit-text-stroke:0.25px currentColor">FYZICAL Therapy &amp; Balance Centers</div>
<div class="x" style="left:3000.70px;top:1201.0px;font-size:25.08px;color:#2546c9;letter-spacing:0.543px;-webkit-text-stroke:0.7px currentColor">Pending Approval</div>
<div class="x" style="left:687.30px;top:1315.0px;font-size:29.26px;color:#2b2b31;letter-spacing:0.454px;-webkit-text-stroke:0.6px currentColor">Rhoda Akafuah</div>
<div class="x" style="left:1137.30px;top:1315.0px;font-size:29.26px;color:#383a44;letter-spacing:0.186px;-webkit-text-stroke:0.25px currentColor">Associate Professor Of Pediatrics</div>
<div class="x" style="left:1685.50px;top:1315.0px;font-size:29.26px;color:#383a44;letter-spacing:0.396px;-webkit-text-stroke:0.25px currentColor">University Of Kentucky</div>
<div class="x" style="left:3000.70px;top:1315.0px;font-size:25.08px;color:#2546c9;letter-spacing:0.543px;-webkit-text-stroke:0.7px currentColor">Pending Approval</div>
<div class="x" style="left:687.30px;top:1429.0px;font-size:29.26px;color:#2b2b31;letter-spacing:-0.168px;-webkit-text-stroke:0.6px currentColor">Emily O</div>
<div class="x" style="left:1134.30px;top:1429.0px;font-size:29.26px;color:#383a44;letter-spacing:0.567px;-webkit-text-stroke:0.25px currentColor">Beauty Advisor</div>
<div class="x" style="left:1685.50px;top:1429.0px;font-size:29.26px;color:#383a44;letter-spacing:0.220px;-webkit-text-stroke:0.25px currentColor">Ulta Beauty</div>
<div class="x" style="left:3000.70px;top:1429.0px;font-size:25.08px;color:#2546c9;letter-spacing:0.543px;-webkit-text-stroke:0.7px currentColor">Pending Approval</div>
<div class="x" style="left:688.30px;top:1543.0px;font-size:29.26px;color:#2b2b31;letter-spacing:-0.094px;-webkit-text-stroke:0.6px currentColor">Gillian Franks</div>
<div class="x" style="left:1134.30px;top:1543.0px;font-size:29.26px;color:#383a44;letter-spacing:0.275px;-webkit-text-stroke:0.25px currentColor">Management Trainee</div>
<div class="x" style="left:1685.50px;top:1543.0px;font-size:29.26px;color:#383a44;letter-spacing:0.322px;-webkit-text-stroke:0.25px currentColor">Enterprise Holdings</div>
<div class="x" style="left:3000.70px;top:1543.0px;font-size:25.08px;color:#2546c9;letter-spacing:0.543px;-webkit-text-stroke:0.7px currentColor">Pending Approval</div>
<div class="x" style="left:687.30px;top:1657.0px;font-size:29.26px;color:#2b2b31;letter-spacing:0.391px;-webkit-text-stroke:0.6px currentColor">Laura Joelsson</div>
<div class="x" style="left:1137.30px;top:1657.0px;font-size:29.26px;color:#383a44;letter-spacing:0.308px;-webkit-text-stroke:0.25px currentColor">Account Coordinator</div>
<div class="x" style="left:1686.50px;top:1657.0px;font-size:29.26px;color:#383a44;letter-spacing:0.219px;-webkit-text-stroke:0.25px currentColor">Southard Communications</div>
<div class="x" style="left:3000.70px;top:1657.0px;font-size:25.08px;color:#2546c9;letter-spacing:0.543px;-webkit-text-stroke:0.7px currentColor">Pending Approval</div>
<div class="x" style="left:687.30px;top:1779.0px;font-size:29.26px;color:#2b2b31;letter-spacing:0.420px;-webkit-text-stroke:0.6px currentColor">Lisa Nguyen</div>
<div class="x" style="left:1134.30px;top:1779.0px;font-size:29.26px;color:#383a44;letter-spacing:0.416px;-webkit-text-stroke:0.25px currentColor">Digital Pathology Technician</div>
<div class="x" style="left:1686.50px;top:1759.0px;font-size:29.26px;color:#383a44;letter-spacing:0.273px;-webkit-text-stroke:0.25px currentColor">The University Of Texas Health Science<br>Center</div>
<div class="x" style="left:3000.70px;top:1779.0px;font-size:25.08px;color:#2546c9;letter-spacing:0.543px;-webkit-text-stroke:0.7px currentColor">Pending Approval</div>
<div class="x" style="left:687.30px;top:1901.0px;font-size:29.26px;color:#2b2b31;letter-spacing:0.410px;-webkit-text-stroke:0.6px currentColor">Efrain Lazcano-Ibarra</div>
<div class="x" style="left:1134.30px;top:1901.0px;font-size:29.26px;color:#383a44;letter-spacing:-0.150px;-webkit-text-stroke:0.25px currentColor">East Region Sales Manager</div>
<div class="x" style="left:1687.50px;top:1901.0px;font-size:29.26px;color:#383a44;letter-spacing:0.314px;-webkit-text-stroke:0.25px currentColor">ArteraAI</div>
<div class="x" style="left:3000.70px;top:1901.0px;font-size:25.08px;color:#2546c9;letter-spacing:0.543px;-webkit-text-stroke:0.7px currentColor">Pending Approval</div>
</div>
</body>
</html>
